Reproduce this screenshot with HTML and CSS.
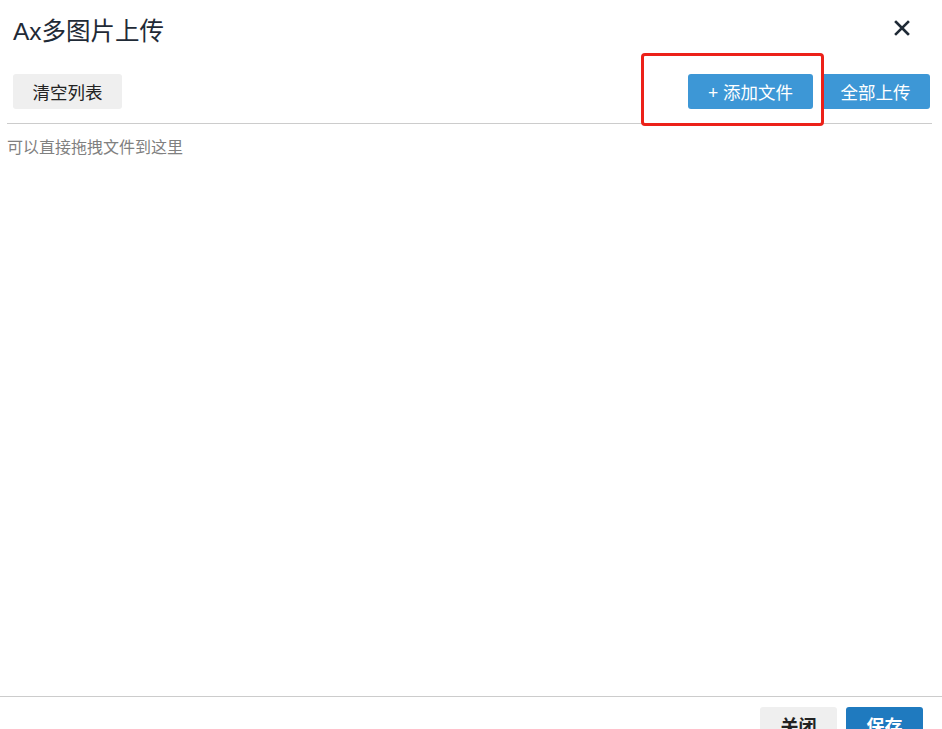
FILE: index.html
```html
<!DOCTYPE html>
<html lang="zh-CN">

<head>
    <meta charset="UTF-8">
    <meta name="viewport" content="width=device-width, initial-scale=1.0">
    <title>Ax多图片上传</title>
    <link rel="stylesheet" href="styles.css">
</head>

<body>
    <div class="dialog">
        <div class="dialog-header">
            <h1 class="dialog-title">Ax多图片上传</h1>
            <button class="close-btn" title="关闭">
                <svg width="16" height="16" viewBox="0 0 16 16">
                    <path d="M2 2 L14 14 M14 2 L2 14" stroke="#1f2a36" stroke-width="2.6" stroke-linecap="square" />
                </svg>
            </button>
        </div>

        <div class="toolbar">
            <button class="btn btn-gray btn-clear">清空列表</button>
            <div class="toolbar-right">
                <button class="btn btn-blue btn-add">+ 添加文件</button>
                <button class="btn btn-blue btn-upload">全部上传</button>
            </div>
        </div>

        <div class="divider"></div>

        <div class="drop-zone">
            <p class="hint">可以直接拖拽文件到这里</p>
        </div>

        <div class="dialog-footer">
            <button class="btn footer-btn btn-gray">关闭</button>
            <button class="btn footer-btn btn-dark">保存</button>
        </div>

        <!-- 標注框 -->
        <div class="mark-box"></div>
    </div>
</body>

</html>
```

FILE: styles.css
```css
* {
    box-sizing: border-box;
}

body {
    margin: 0;
    background: #fff;
    font-family: "Liberation Sans", "Noto Sans CJK SC", sans-serif;
}

.dialog {
    position: relative;
    height: 729px;
    display: flex;
    flex-direction: column;
    overflow: hidden;
}

/* 標題 */
.dialog-header {
    height: 60px;
    padding: 0 32px 0 13px;
    display: flex;
    align-items: center;
    justify-content: space-between;
}

.dialog-title {
    margin: 0;
    font-size: 24.5px;
    font-weight: normal;
    color: #1f2a36;
    position: relative;
    top: -1px;
}

.close-btn {
    border: none;
    background: none;
    padding: 0;
    width: 16px;
    height: 16px;
    cursor: pointer;
    position: relative;
    top: -2px;
}

/* 工具列 */
.toolbar {
    padding: 14px 12px 0 13px;
    display: flex;
    justify-content: space-between;
}

.toolbar-right {
    display: flex;
    gap: 8px;
}

.btn {
    height: 35px;
    border: none;
    border-radius: 3px;
    font-family: inherit;
    font-size: 17.5px;
    padding: 0;
    cursor: pointer;
}

.btn-clear,
.btn-upload {
    width: 109px;
}

.btn-add {
    width: 125px;
}

.btn-gray {
    background: #efefef;
    color: #222;
}

.btn-blue {
    background: #3d97d6;
    color: #fff;
}

.btn-dark {
    background: #1f7abf;
    color: #fff;
}

.divider {
    margin: 14px 10px 0 7px;
    border-top: 1px solid #ccc;
}

/* 拖拽區 */
.drop-zone {
    flex: 1;
    padding: 0 7px;
}

.hint {
    margin: 14px 0 0;
    font-size: 16px;
    line-height: 20px;
    color: #808080;
}

/* 底部 */
.dialog-footer {
    border-top: 1px solid #ccc;
    padding: 10px 19px 0 0;
    height: 33px;
    display: flex;
    justify-content: flex-end;
    gap: 9px;
}

.footer-btn {
    width: 77px;
    font-size: 18px;
    font-weight: bold;
    flex-shrink: 0;
}

.mark-box {
    position: absolute;
    left: 641px;
    top: 53px;
    width: 183px;
    height: 73px;
    border: 3px solid #ec2119;
    border-radius: 4px;
}
```
